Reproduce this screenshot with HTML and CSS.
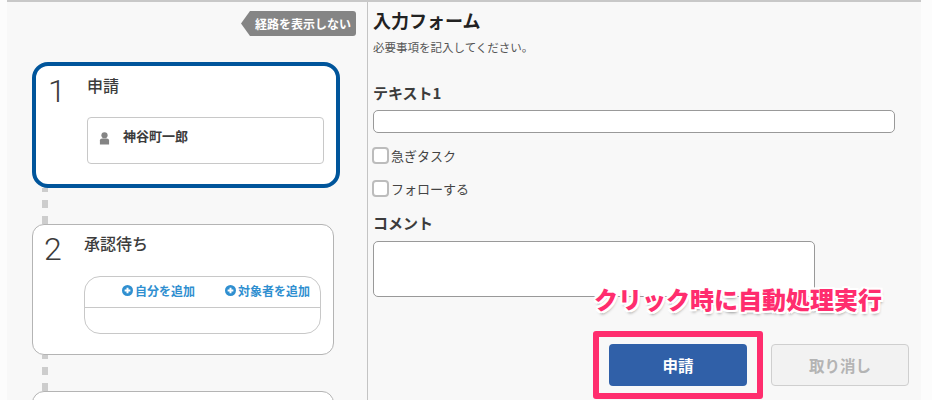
FILE: index.html
```html
<!DOCTYPE html>
<html lang="ja">
  <head>
    <meta charset="utf-8">
    <title>入力フォーム</title>
    <link rel="stylesheet" href="styles.css">
  </head>
  <body>
    <div class="main">
      <div class="route">
        <div class="route-bar">
          <button class="route-toggle">経路を表示しない</button>
        </div>
        <div class="step step-current">
          <div class="step-num">1</div>
          <div class="step-body">
            <div class="step-title">申請</div>
            <div class="user-box">
              <svg class="user-icon" viewBox="0 0 12 14">
                <circle cx="6" cy="4" r="3.4"></circle>
                <path d="M1 14 V9.6 Q1 7.6 3.4 7.6 H8.6 Q11 7.6 11 9.6 V14 Z"></path>
              </svg>
              <span>神谷町一郎</span>
            </div>
          </div>
        </div>
        <div class="connector"></div>
        <div class="step">
          <div class="step-num">2</div>
          <div class="step-body">
            <div class="step-title">承認待ち</div>
            <div class="assign-box">
              <div class="assign-actions">
                <a class="assign-link">
                  <svg class="plus-icon" viewBox="0 0 10 10">
                    <circle cx="5" cy="5" r="5" fill="#2f8fd0"></circle>
                    <path d="M5 2.4 V7.6 M2.4 5 H7.6" stroke="#fff" stroke-width="1.8"></path>
                  </svg>自分を追加
                </a>
                <a class="assign-link">
                  <svg class="plus-icon" viewBox="0 0 10 10">
                    <circle cx="5" cy="5" r="5" fill="#2f8fd0"></circle>
                    <path d="M5 2.4 V7.6 M2.4 5 H7.6" stroke="#fff" stroke-width="1.8"></path>
                  </svg>対象者を追加
                </a>
              </div>
            </div>
          </div>
        </div>
        <div class="connector"></div>
        <div class="step"></div>
      </div>
      <div class="form">
        <h1 class="form-title">入力フォーム</h1>
        <p class="form-note">必要事項を記入してください。</p>
        <label class="field-label label-text">テキスト1</label>
        <div class="text-input"></div>
        <div class="check-row check-first"><span class="check"></span>急ぎタスク</div>
        <div class="check-row check-second"><span class="check"></span>フォローする</div>
        <label class="field-label label-comment">コメント</label>
        <div class="text-area"></div>
        <div class="actions">
          <button class="btn btn-primary">申請</button>
          <button class="btn btn-cancel">取り消し</button>
        </div>
      </div>
    </div>
    <div class="callout-box"></div>
    <div class="callout-text">クリック時に自動処理実行</div>
  </body>
</html>
```

FILE: styles.css
```css
* {
  box-sizing: border-box;
}
html,
body {
  margin: 0;
  padding: 0;
  height: 400px;
  overflow: hidden;
}
body {
  position: relative;
  background-color: #fcfcfc;
  color: #3c3c3c;
  font-family: "Noto Sans CJK JP", "Liberation Sans", sans-serif;
}
.main {
  display: flex;
  margin-left: 7px;
  width: 914px;
  height: 400px;
  border-top: 2px solid #c8c8c8;
  background-color: #f8f8f8;
}
.route {
  flex: none;
  width: 361px;
  height: 398px;
  padding-left: 25px;
  border-right: 1px solid #c4c4c4;
  overflow: hidden;
}
.route-bar {
  display: flex;
  justify-content: flex-end;
  height: 60px;
  padding: 9px 11px 0 0;
}
.route-toggle {
  width: 115px;
  height: 25px;
  padding: 0 0 0 9px;
  border: 0;
  border-radius: 0 3px 3px 0;
  background-color: #858585;
  color: #fff;
  font: bold 12px "Noto Sans CJK JP", sans-serif;
  clip-path: polygon(9px 0, 100% 0, 100% 100%, 9px 100%, 0 50%);
}
.step {
  display: flex;
  width: 302px;
  min-height: 131px;
  padding: 9px 12px 20px 0;
  border: 1px solid #b4b4b4;
  border-radius: 12px;
  background-color: #fff;
}
.step-current {
  width: 308px;
  min-height: 126px;
  padding-top: 10px;
  border: 4px solid #00559b;
  border-radius: 16px;
}
.step-num {
  flex: none;
  width: 51px;
  padding-left: 11px;
  color: #3c3c3c;
  font: 300 32px/30px Roboto, sans-serif;
}
.step-current .step-num {
  padding-left: 12px;
}
.step-body {
  flex: 1;
}
.step-title {
  height: 20px;
  margin-top: -1px;
  font-size: 16px;
  font-weight: 500;
  line-height: 20px;
}
.user-box {
  display: flex;
  align-items: flex-start;
  height: 47px;
  margin-top: 22px;
  padding: 9px 0 0 11px;
  border: 1px solid #c8c8c8;
  border-radius: 4px;
  font-size: 13px;
  font-weight: 700;
  line-height: 18px;
}
.user-icon {
  width: 11px;
  height: 14px;
  margin: 4px 13px 0 0;
  fill: #848484;
}
.assign-box {
  height: 58px;
  margin-top: 23px;
  border: 1px solid #c8c8c8;
  border-radius: 16px;
}
.assign-actions {
  display: flex;
  justify-content: flex-end;
  gap: 30px;
  height: 31px;
  padding: 5px 10px 0 0;
  border-bottom: 1px solid #c8c8c8;
}
.assign-link {
  display: flex;
  align-items: center;
  height: 17px;
  color: #2f8fd0;
  font-size: 12px;
  font-weight: 700;
}
.plus-icon {
  width: 11px;
  height: 11px;
  margin-right: 2px;
}
.connector {
  width: 6px;
  height: 36px;
  margin-left: 10px;
  background-image: repeating-linear-gradient(to top, #cdcdcd 0 8px, transparent 8px 16px);
}
.form {
  flex: 1;
  padding-left: 5px;
}
.form-title {
  margin: 5px 0 0;
  color: #222;
  font-size: 18px;
  font-weight: 700;
  line-height: 26px;
}
.form-note {
  margin: 6px 0 0;
  color: #555;
  font-size: 11.5px;
  line-height: 16px;
}
.field-label {
  display: block;
  font-size: 15px;
  font-weight: 700;
  line-height: 20px;
}
.label-text {
  margin-top: 28px;
}
.text-input {
  width: 522px;
  height: 23px;
  margin-top: 7px;
  border: 1px solid #999;
  border-radius: 5px;
  background-color: #fff;
}
.check-row {
  display: flex;
  align-items: center;
  margin-left: -1px;
  color: #444;
  font-size: 13px;
  line-height: 17px;
}
.check-first {
  margin-top: 14px;
}
.check-second {
  margin-top: 16px;
}
.check {
  width: 17px;
  height: 17px;
  margin-right: 2px;
  border: 2px solid #bcbcbc;
  border-radius: 4px;
  background-color: #fff;
}
.label-comment {
  margin-top: 16px;
}
.text-area {
  width: 442px;
  height: 56px;
  margin-top: 8px;
  border: 1px solid #999;
  border-radius: 5px;
  background-color: #fff;
}
.actions {
  display: flex;
  gap: 24px;
  margin: 47px 0 0 236px;
}
.btn {
  width: 138px;
  height: 42px;
  padding: 0;
  border-radius: 4px;
  font: bold 15.5px "Noto Sans CJK JP", sans-serif;
}
.btn-primary {
  border: 0;
  background-color: #3060a8;
  color: #fff;
}
.btn-cancel {
  border: 1px solid #cfcfcf;
  background-color: #f2f2f2;
  color: #b4b4b4;
}
.callout-box {
  position: absolute;
  left: 593px;
  top: 331px;
  width: 170px;
  height: 68px;
  border: 6px solid #ff2d6e;
  border-radius: 3px;
}
.callout-text {
  position: absolute;
  left: 594px;
  top: 282px;
  color: #ff2d6e;
  font-size: 24px;
  font-weight: 900;
  line-height: 34px;
  white-space: nowrap;
  text-shadow: 2px 0 0 #fff, -2px 0 0 #fff, 0 2px 0 #fff, 0 -2px 0 #fff, 2px 2px 0 #fff, -2px 2px 0 #fff, 2px -2px 0 #fff, -2px -2px 0 #fff, 1px 3px 3px #999;
}
```
